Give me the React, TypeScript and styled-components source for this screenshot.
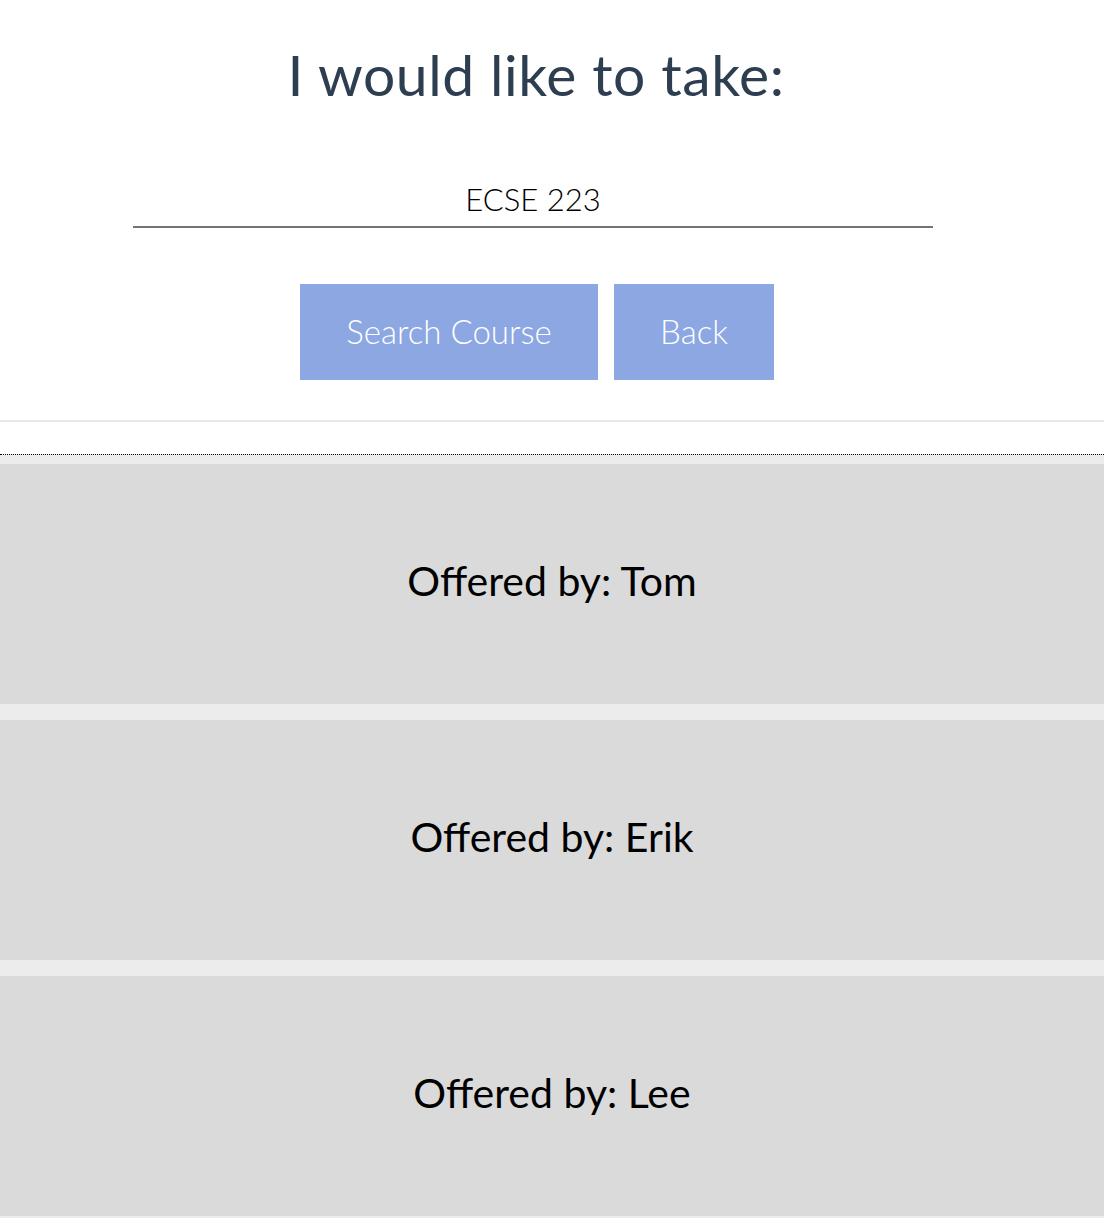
import React from "react";
import styled, { createGlobalStyle } from "styled-components";

const GlobalStyle = createGlobalStyle`
  body {
    margin: 0;
    background: #ffffff;
    font-family: Lato, "Open Sans", sans-serif;
  }
`;

const Page = styled.div`
  display: flex;
  flex-direction: column;
`;

const SearchArea = styled.div`
  display: flex;
  flex-direction: column;
  align-items: center;
  padding: 0 32px 40px 0;
  border-bottom: 2px solid #e8e8e8;
`;

const Title = styled.h1`
  margin: 38px 0 0;
  font-size: 57px;
  font-weight: 400;
  line-height: 72px;
  color: #2c3e50;
  letter-spacing: 0.6px;
`;

const CourseInput = styled.input`
  margin: 71px 6px 0 0;
  width: 800px;
  box-sizing: border-box;
  border: none;
  border-bottom: 2px solid #737373;
  padding: 0 0 9px;
  font-family: Lato, sans-serif;
  font-size: 31px;
  font-weight: 300;
  line-height: 36px;
  text-align: center;
  color: #000000;
  outline: none;
  background: transparent;
`;

const ButtonRow = styled.div`
  display: flex;
  gap: 16px;
  margin: 56px 0 0 2px;
`;

const ActionButton = styled.button<{ $width: number }>`
  width: ${(p) => p.$width}px;
  height: 96px;
  border: none;
  background: #8ca7e2;
  color: #ffffff;
  font-family: Lato, sans-serif;
  font-size: 33px;
  font-weight: 300;
  padding-bottom: 4px;
  cursor: pointer;
`;

const OfferList = styled.div`
  margin-top: 32px;
  border-top: 1px dotted #000000;
  background: #ececec;
  padding: 9px 0 2px;
  display: flex;
  flex-direction: column;
  gap: 16px;
`;

const OfferCard = styled.div`
  height: 240px;
  background: #dadada;
  display: flex;
  align-items: center;
  justify-content: center;
  padding-bottom: 8px;
  box-sizing: border-box;
  font-size: 41px;
  font-weight: 400;
  color: #000000;
`;

const teachers = ["Tom", "Erik", "Lee"];

const App: React.FC = () => {
  const [course, setCourse] = React.useState<string>("ECSE 223");

  return (
    <Page>
      <GlobalStyle />
      <SearchArea>
        <Title>I would like to take:</Title>
        <CourseInput
          value={course}
          onChange={(event: React.ChangeEvent<HTMLInputElement>) =>
            setCourse(event.target.value)
          }
        />
        <ButtonRow>
          <ActionButton $width={298}>Search Course</ActionButton>
          <ActionButton $width={160}>Back</ActionButton>
        </ButtonRow>
      </SearchArea>
      <OfferList>
        {teachers.map((name) => (
          <OfferCard key={name}>Offered by: {name}</OfferCard>
        ))}
      </OfferList>
    </Page>
  );
};

export default App;
